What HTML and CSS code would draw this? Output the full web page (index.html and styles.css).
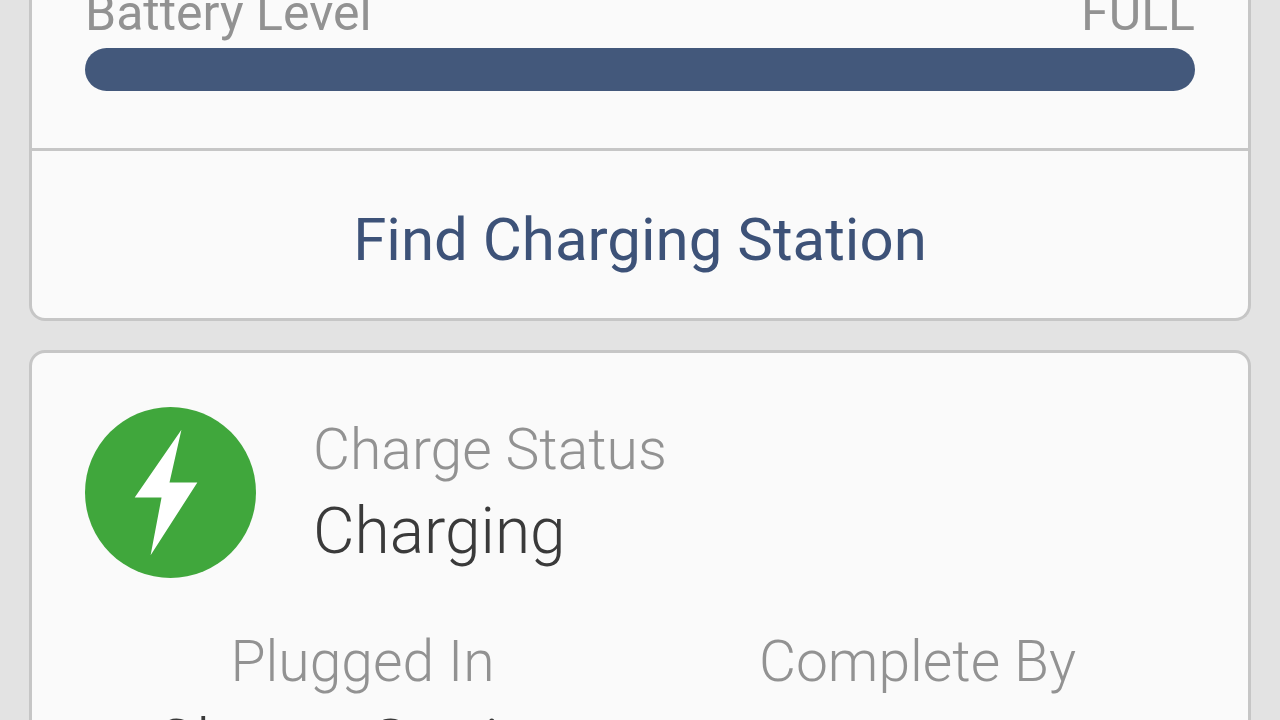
FILE: index.html
```html
<!DOCTYPE html>
<html lang="en">
<head>
<meta charset="utf-8">
<title>Battery</title>
<meta name="viewport" content="width=device-width">
<link rel="stylesheet" href="styles.css">
</head>
<body>
<main>
	<section class="card">
		<div class="battery">
			<div class="battery-text">
				<span>Battery Level</span>
				<span>FULL</span>
			</div>
			<div class="bar"><div class="bar-fill" style="width:100%"></div></div>
		</div>
		<button class="find" type="button">Find Charging Station</button>
	</section>
	<section class="card charge">
		<div class="status">
			<svg class="bolt" viewBox="0 0 172 172" aria-hidden="true">
				<circle cx="86" cy="86" r="86" fill="#40a73c"/>
				<path d="M97 23 50 91H77L66 149 113 76H85Z" fill="#fff"/>
			</svg>
			<dl>
				<dt>Charge Status</dt>
				<dd>Charging</dd>
			</dl>
		</div>
		<dl class="details">
			<div>
				<dt>Plugged In</dt>
				<dd>Charge Station</dd>
			</div>
			<div>
				<dt>Complete By</dt>
				<dd></dd>
			</div>
		</dl>
	</section>
</main>
</body>
</html>
```

FILE: styles.css
```css
* {
	box-sizing:border-box;
}
body {
	margin:0;
	height:100vh;
	overflow:hidden;
	background:#e3e3e3;
	font:300 57px/80px Roboto, sans-serif;
	color:#3a3a3a;
}
main {
	display:flex;
	flex-direction:column;
	gap:29px;
	padding:0 29px;
}
.card {
	background:#fafafa;
	border:3px solid #c6c6c6;
	border-radius:16px;
}
.card:first-child {
	border-top:0;
	border-radius:0 0 16px 16px;
}
.battery {
	padding:0 53px 57px;
}
.battery-text {
	display:flex;
	justify-content:space-between;
	height:48px;
	align-items:flex-end;
	color:#929292;
	font-size:50px;
	font-weight:400;
	line-height:70px;
}
.bar {
	height:43px;
	border-radius:22px;
	overflow:hidden;
	background:#ddd;
}
.bar-fill {
	height:100%;
	background:#43587b;
}
.find {
	display:block;
	width:100%;
	padding:49px 0 38px;
	border:0;
	border-top:3px solid #c6c6c6;
	background:none;
	color:#3d5278;
	font:400 60px/80px Roboto, sans-serif;
}
.charge {
	padding:54px 53px 0;
}
.status {
	display:flex;
	align-items:center;
	gap:57px;
}
.bolt {
	width:171px;
	height:171px;
}
dl, dd {
	margin:0;
}
dt {
	color:#929292;
}
dd {
	min-height:80px;
	margin-top:2px;
	font-size:64px;
}
.status dl {
	margin-bottom:4px;
}
.details {
	display:grid;
	grid-template-columns:1fr 1fr;
	margin-top:44px;
	text-align:center;
}
```
